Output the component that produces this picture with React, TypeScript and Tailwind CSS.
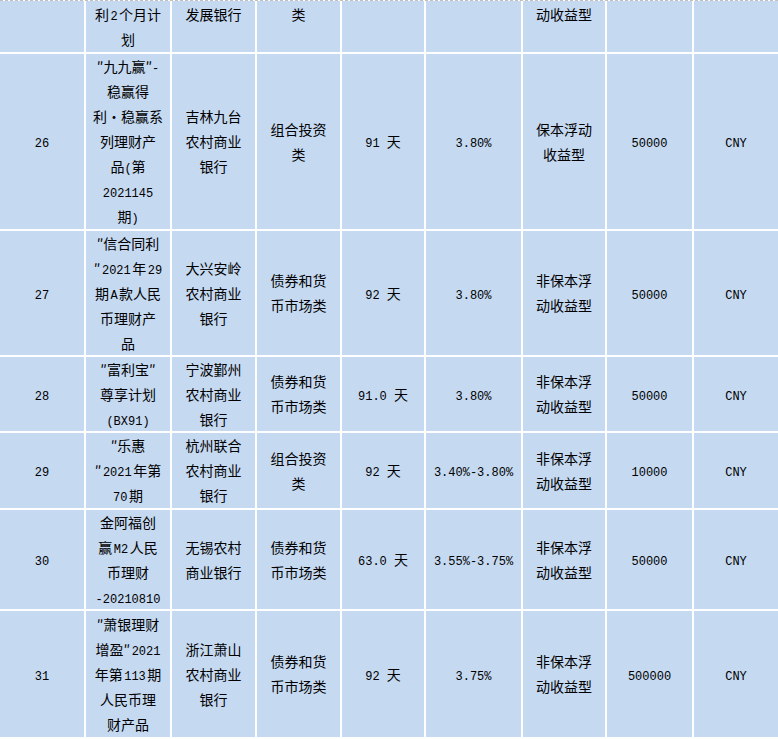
import React from "react";

type Cell = string[];

// last rows of the product table; the first row is cut off at the top of the view
const topRow: { lines: Cell; align: "top" | "bottom" }[] = [
  { lines: [], align: "top" },
  { lines: ["利2个月计", "划"], align: "bottom" },
  { lines: ["发展银行"], align: "top" },
  { lines: ["类"], align: "top" },
  { lines: [], align: "top" },
  { lines: [], align: "top" },
  { lines: ["动收益型"], align: "top" },
  { lines: [], align: "top" },
  { lines: [], align: "top" },
];

const rows: Cell[][] = [
  [
    ["26"],
    ["″九九赢″-", "稳赢得", "利·稳赢系", "列理财产", "品(第", "2021145", "期)"],
    ["吉林九台", "农村商业", "银行"],
    ["组合投资", "类"],
    ["91 天"],
    ["3.80%"],
    ["保本浮动", "收益型"],
    ["50000"],
    ["CNY"],
  ],
  [
    ["27"],
    ["″信合同利", "″2021年29", "期A款人民", "币理财产", "品"],
    ["大兴安岭", "农村商业", "银行"],
    ["债券和货", "币市场类"],
    ["92 天"],
    ["3.80%"],
    ["非保本浮", "动收益型"],
    ["50000"],
    ["CNY"],
  ],
  [
    ["28"],
    ["″富利宝″", "尊享计划", "(BX91)"],
    ["宁波鄞州", "农村商业", "银行"],
    ["债券和货", "币市场类"],
    ["91.0 天"],
    ["3.80%"],
    ["非保本浮", "动收益型"],
    ["50000"],
    ["CNY"],
  ],
  [
    ["29"],
    ["″乐惠", "″2021年第", "70期"],
    ["杭州联合", "农村商业", "银行"],
    ["组合投资", "类"],
    ["92 天"],
    ["3.40%-3.80%"],
    ["非保本浮", "动收益型"],
    ["10000"],
    ["CNY"],
  ],
  [
    ["30"],
    ["金阿福创", "赢M2人民", "币理财", "-20210810"],
    ["无锡农村", "商业银行"],
    ["债券和货", "币市场类"],
    ["63.0 天"],
    ["3.55%-3.75%"],
    ["非保本浮", "动收益型"],
    ["50000"],
    ["CNY"],
  ],
  [
    ["31"],
    ["″萧银理财", "增盈″2021", "年第113期", "人民币理", "财产品"],
    ["浙江萧山", "农村商业", "银行"],
    ["债券和货", "币市场类"],
    ["92 天"],
    ["3.75%"],
    ["非保本浮", "动收益型"],
    ["500000"],
    ["CNY"],
  ],
];

// half-width latin runs are set in a mono face, like the CJK system font does
function Mixed({ text }: { text: string }) {
  const parts = text.split(/([\x20-\x7e]+)/);
  return (
    <>
      {parts.map((p, i) => {
        if (!p) return null;
        if (/[\x20-\x7e]/.test(p)) {
          const word = /[A-Za-z0-9]/.test(p);
          const left = word && !!parts[i - 1] && !p.startsWith(" ");
          const right = word && !!parts[i + 1] && !p.endsWith(" ");
          return (
            <span
              key={i}
              className={`font-['Liberation_Mono',monospace] text-[12px] leading-none ${left ? "pl-[1.5px]" : ""} ${
                right ? "pr-[1.5px]" : ""
              }`}
            >
              {p}
            </span>
          );
        }
        return <span key={i}>{p}</span>;
      })}
    </>
  );
}

function Lines({ lines }: { lines: Cell }) {
  return (
    <>
      {lines.map((l, i) => (
        <div key={i} className="h-[25px] whitespace-nowrap">
          <Mixed text={l} />
        </div>
      ))}
    </>
  );
}

export default function App() {
  return (
    <div className="w-[778px] h-[739px] overflow-hidden bg-white font-['Noto_Sans_CJK_SC','Noto_Sans',sans-serif] text-[14px] leading-[25px] text-black">
      <div className="border-t border-dashed border-[#c0c0c0] grid grid-cols-[84px_84px_83px_83px_82px_95px_82px_85px_1fr] grid-rows-[51px_175px_124px_74px_75px_99px_126px] gap-[2px] pb-[2px]">
        {topRow.map((c, i) => (
          <div
            key={`t${i}`}
            className={`bg-[#c5d9f1] flex flex-col items-center text-center ${
              c.align === "bottom" ? "justify-end" : "justify-start pt-[1px]"
            }`}
          >
            <Lines lines={c.lines} />
          </div>
        ))}
        {rows.map((row, r) =>
          row.map((cell, c) => (
            <div
              key={`${r}-${c}`}
              className="bg-[#c5d9f1] flex flex-col items-center justify-center text-center"
            >
              <Lines lines={cell} />
            </div>
          ))
        )}
      </div>
    </div>
  );
}
